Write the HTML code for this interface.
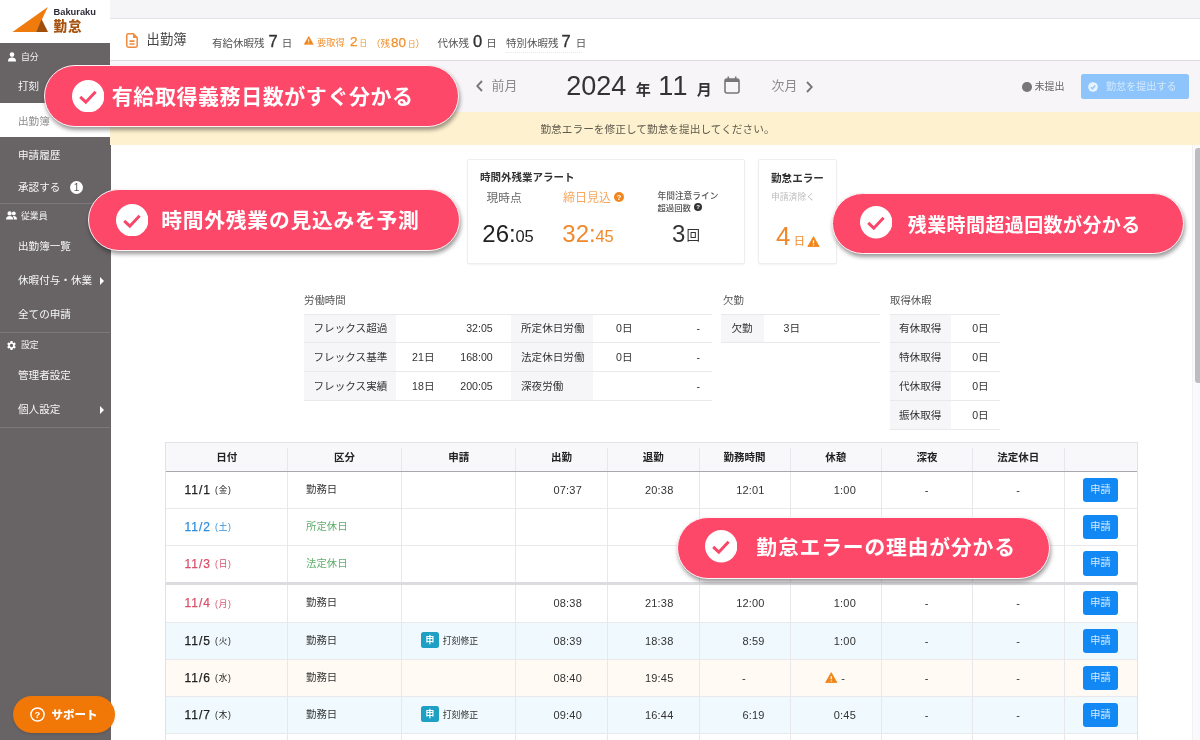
<!DOCTYPE html>
<html lang="ja">
<head>
<meta charset="utf-8">
<title>出勤簿</title>
<style>
*{box-sizing:border-box;margin:0;padding:0}
html,body{width:1200px;height:740px;overflow:hidden;background:#fff}
body{will-change:transform;font-family:"Liberation Sans","Noto Sans CJK JP",sans-serif;color:#333;position:relative;font-size:12px}
.abs{position:absolute}
.jp{font-family:"Noto Sans CJK JP","Liberation Sans",sans-serif}
/* sidebar */
#side{position:absolute;left:0;top:0;width:110.6px;height:740px;background:#686466}
#logo{position:absolute;left:0;top:0;width:110.6px;height:42.7px;background:#fff}
.sh{position:absolute;left:0;width:110px;color:#f2f2f2;font-size:8.9px;padding-left:21px;height:12px;line-height:12px}
.si{position:absolute;left:0;width:110px;color:#f6f6f6;font-size:10.6px;padding-left:18px;height:16px;line-height:16px;white-space:nowrap}
.sd{position:absolute;left:0;width:110px;height:1px;background:#7d797b}
.tri{position:absolute;left:100.3px;width:0;height:0;border-left:4.5px solid #fff;border-top:4px solid transparent;border-bottom:4px solid transparent}
/* top */
#strip{position:absolute;left:110px;top:0;width:1090px;height:19px;background:#f5f5f7;border-bottom:1px solid #e4e4e6}
#head{position:absolute;left:110px;top:19px;width:1090px;height:42px;background:#fff;border-bottom:1px solid #dcdcde}
#datebar{position:absolute;left:110px;top:61px;width:1090px;height:51px;background:#f7f5f7}
#warn{position:absolute;left:110px;top:112px;width:1090px;height:33px;background:#fef1d0;color:#5f5a4c;font-size:10.7px;line-height:34px;padding-left:5px;text-align:center}
.t{position:absolute;white-space:nowrap}
.hb{top:9.8px;line-height:24px;color:#555}
.hb .s{font-size:10.5px}
.hb .n{font-size:16.5px;color:#333;-webkit-text-stroke:.35px #333}
.hb.o{color:#f0902e}
/* pills */
.pill{position:absolute;background:#fd4869;border:1.4px solid #fff4f5;border-radius:40px;box-shadow:1px 3px 4px rgba(0,0,0,.4);color:#fff;font-weight:700;font-family:"Noto Sans CJK JP",sans-serif}
.pill .ck{position:absolute;background:#fff;border-radius:50%}
.pill .tx{position:absolute;white-space:nowrap}
/* cards */
.card{position:absolute;background:#fff;border:1px solid #eeeef1;border-radius:2px;box-shadow:0 1px 2px rgba(0,0,0,.05)}
/* summary */
.sum{position:absolute;font-size:10.5px;color:#333}
.sum .r{position:absolute;left:0;height:28.5px;border-top:1px solid #e6e6e8}
.sum .l{position:absolute;top:0;height:100%;background:#f7f7f9}
.sum .c{position:absolute;top:0;line-height:28px;white-space:nowrap}
.sc{font-size:10.6px;line-height:20px;color:#333}
/* table */
#tbl{position:absolute;left:166px;top:442.7px;width:970.7px;height:298px;border:none;overflow:hidden;box-shadow:0 0 0 1px #e2e2e6}
.th{position:absolute;top:0;height:28.5px;line-height:28.5px;text-align:center;font-weight:700;font-size:10.5px;color:#222}
.vl{position:absolute;top:5px;width:1px;height:298px;background:#e8e8ec}
.dt{line-height:20px}
.dt .d{font-size:12px;letter-spacing:1px;-webkit-text-stroke:.25px currentColor}
.dt .w{font-size:8.6px;letter-spacing:.8px;margin-left:4px;position:relative;top:-.5px}
.kb{font-size:10.4px;line-height:20px}
.tv{font-size:11px;line-height:20px;color:#333;letter-spacing:.2px}
.bd{width:18.5px;height:16.2px;border-radius:2.5px;background:#1e9fc4;color:#fff;font-weight:700;font-size:8.8px;line-height:16.2px;text-align:center}
.btn{position:absolute;width:35.6px;height:24.4px;background:#1188f3;border-radius:3px;color:#d6e9fd;font-size:10.2px;line-height:24.4px;text-align:center}
</style>
</head>
<body>
<div id="side">
  <div id="logo">
    <svg class="abs" style="left:0;top:0" width="110" height="42" viewBox="0 0 110 42">
      <polygon points="12.5,32 47.8,7 36,32" fill="#f07a0c"/>
      <polygon points="36,32 41.6,19.3 48,32" fill="#a04e0c"/>
      <text x="53.5" y="15" font-family="Liberation Sans, sans-serif" font-weight="700" font-size="8.6" fill="#2c2c38" textLength="42.5" lengthAdjust="spacingAndGlyphs">Bakuraku</text>
      <text x="53.5" y="31.3" font-family="Noto Sans CJK JP, sans-serif" font-weight="900" font-size="13.6" fill="#a8530f" letter-spacing="1">勤怠</text>
    </svg>
  </div>
  <svg class="abs" style="left:8px;top:51.5px" width="8" height="10" viewBox="0 0 8 10"><circle cx="4" cy="2.6" r="2.3" fill="#fff"/><path d="M0 9.5 C0 6.2 2 5.4 4 5.4 C6 5.4 8 6.2 8 9.5 Z" fill="#fff"/></svg>
  <div class="sh" style="top:50.8px">自分</div>
  <div class="si" style="top:78px">打刻</div>
  <div class="abs" style="left:0;top:102.5px;width:110.6px;height:34.2px;background:#fff"></div>
  <div class="si" style="top:113px;color:#8c8c8c">出勤簿</div>
  <div class="si" style="top:147px">申請履歴</div>
  <div class="si" style="top:179px">承認する</div>
  <div class="abs" style="left:70px;top:180.5px;width:13px;height:13px;border-radius:50%;background:#fff;color:#555;font-size:10px;line-height:13.5px;text-align:center">1</div>
  <div class="sd" style="top:203px"></div>
  <svg class="abs" style="left:6px;top:211px" width="11" height="9" viewBox="0 0 11 9"><circle cx="3.6" cy="2.4" r="2.1" fill="#fff"/><path d="M0 8.6 C0 5.8 1.8 5 3.6 5 C5.4 5 7.2 5.8 7.2 8.6 Z" fill="#fff"/><circle cx="7.8" cy="2.4" r="1.9" fill="#fff"/><path d="M7.9 8.6 C7.9 6.6 7.4 5.6 6.6 5.1 C7 5 7.4 5 7.8 5 C9.4 5 11 5.8 11 8.6 Z" fill="#fff"/></svg>
  <div class="sh" style="top:210.4px">従業員</div>
  <div class="si" style="top:238px">出勤簿一覧</div>
  <div class="si" style="top:272px">休暇付与・休業</div>
  <div class="tri" style="top:276.5px"></div>
  <div class="si" style="top:306px">全ての申請</div>
  <div class="sd" style="top:332px"></div>
  <svg class="abs" style="left:6.2px;top:340.300px" width="11" height="11" viewBox="0 0 24 24"><path fill="#fff" d="M19.14 12.94c.04-.3.06-.61.06-.94 0-.32-.02-.64-.07-.94l2.03-1.58a.49.49 0 0 0 .12-.61l-1.92-3.32a.49.49 0 0 0-.59-.22l-2.39.96c-.5-.38-1.03-.7-1.62-.94l-.36-2.54a.48.48 0 0 0-.48-.41h-3.84a.48.48 0 0 0-.47.41l-.36 2.54c-.59.24-1.13.57-1.62.94l-2.39-.96a.49.49 0 0 0-.59.22L2.74 8.87a.48.48 0 0 0 .12.61l2.03 1.58c-.05.3-.09.63-.09.94s.02.64.07.94l-2.03 1.58a.49.49 0 0 0-.12.61l1.92 3.32c.12.22.37.29.59.22l2.39-.96c.5.38 1.03.7 1.62.94l.36 2.54c.05.24.24.41.48.41h3.84c.24 0 .44-.17.47-.41l.36-2.54c.59-.24 1.13-.56 1.62-.94l2.39.96c.22.08.47 0 .59-.22l1.92-3.32a.48.48 0 0 0-.12-.61l-2.01-1.58zM12 15.6A3.6 3.6 0 1 1 12 8.400a3.6 3.6 0 0 1 0 7.2z"/></svg>
  <div class="sh" style="top:339px">設定</div>
  <div class="si" style="top:367px">管理者設定</div>
  <div class="si" style="top:401px">個人設定</div>
  <div class="tri" style="top:405.5px"></div>
  <div class="sd" style="top:427px"></div>
  <div class="abs" style="left:12.5px;top:696px;width:102.5px;height:37px;border-radius:18.5px;background:#f17707;box-shadow:0 1px 3px rgba(0,0,0,.15)"></div>
  <svg class="abs" style="left:29.5px;top:706.8px" width="15" height="15" viewBox="0 0 15 15"><circle cx="7.5" cy="7.5" r="6.600" fill="none" stroke="#fff" stroke-width="1.5"/><text x="7.5" y="11" text-anchor="middle" font-family="Liberation Sans, sans-serif" font-weight="700" font-size="9.5" fill="#fff">?</text></svg>
  <div class="abs jp" style="left:51.6px;top:705.3px;color:#fff;font-weight:900;font-size:11.5px;line-height:18px;white-space:nowrap">サポート</div>
</div>
<div id="strip"></div>
<div id="head">
  <svg class="abs" style="left:16px;top:13.5px" width="12" height="15" viewBox="0 0 12 15"><path d="M2.2 0.8 H7.4 L11.2 4.6 V12.8 Q11.2 14.2 9.8 14.2 H2.2 Q0.8 14.2 0.8 12.8 V2.2 Q0.8 0.8 2.2 0.8 Z" fill="none" stroke="#f08a3c" stroke-width="1.5" stroke-linejoin="round"/><path d="M7 0.8 V5 H11.2 Z" fill="#f08a3c"/><path d="M3.5 8.1 H8.5 M3.5 11 H8.5" stroke="#f08a3c" stroke-width="1.7"/></svg>
  <div class="t" style="left:36.6px;top:11.4px;font-size:13.3px;line-height:20px;color:#444">出勤簿</div>
  <div class="t hb" style="left:102px"><span class="s">有給休暇残</span><span class="n" style="margin-left:4px">7</span><span class="s" style="margin-left:4px">日</span></div>
  <svg class="abs" style="left:194px;top:17.2px" width="9.5" height="9" viewBox="0 0 19 18"><path d="M9.5 1 L18.3 16.6 H0.7 Z" fill="#f0861c" stroke="#f0861c" stroke-width="1.4" stroke-linejoin="round"/><path d="M9.5 6.5 V11.5 M9.5 13.4 V15" stroke="#fff" stroke-width="2"/></svg>
  <div class="t hb o" style="left:207px;top:11.3px"><span style="font-size:9.3px">要取得</span><span style="font-size:13.6px;margin-left:5px;-webkit-text-stroke:.25px #f0902e">2</span><span style="font-size:7.5px;margin-left:2px">日</span></div>
  <div class="t hb o" style="left:261px;top:11.6px"><span style="font-size:9.5px">（残</span><span style="font-size:13.5px;margin-left:1px;-webkit-text-stroke:.25px #f0902e">80</span><span style="font-size:7.5px;margin-left:2px">日</span><span style="font-size:9.5px">）</span></div>
  <div class="t hb" style="left:327.5px"><span class="s">代休残</span><span class="n" style="margin-left:4px">0</span><span class="s" style="margin-left:4px">日</span></div>
  <div class="t hb" style="left:396px"><span class="s">特別休暇残</span><span class="n" style="margin-left:3px">7</span><span class="s" style="margin-left:5px">日</span></div>
  <div class="abs" style="left:396px;top:32.5px;width:76px;height:0;border-top:1px dotted #e6e6ea"></div>
</div>
<div id="datebar">
  <svg class="abs" style="left:365.8px;top:18.8px" width="7" height="12" viewBox="0 0 7 12"><path d="M6 1 L1.2 6 L6 11" fill="none" stroke="#77777a" stroke-width="1.9"/></svg>
  <div class="t" style="left:381.5px;top:15.3px;font-size:12.9px;line-height:20px;color:#8a8a8d">前月</div>
  <div class="t" style="left:456.3px;top:8.6px;line-height:32px;color:#333"><span style="font-size:27px">2024</span><span class="jp" style="font-size:15px;font-weight:700;margin-left:9.3px">年</span><span style="font-size:27px;margin-left:7.5px;letter-spacing:1.2px">11</span><span class="jp" style="font-size:15px;font-weight:700;margin-left:8px">月</span></div>
  <svg class="abs" style="left:614px;top:14.7px" width="16" height="18" viewBox="0 0 16 18"><rect x="1" y="3" width="14" height="14" rx="2" fill="none" stroke="#77777a" stroke-width="1.6"/><path d="M1 4.6 Q1 3 3 3 H13 Q15 3 15 4.600 V6 H1 Z" fill="#77777a"/><path d="M4.3 0.600 V3 M11.7 0.600 V3" stroke="#77777a" stroke-width="1.6"/></svg>
  <div class="t" style="left:661.5px;top:15.3px;font-size:12.9px;line-height:20px;color:#8a8a8d">次月</div>
  <svg class="abs" style="left:696px;top:19.5px" width="7" height="12" viewBox="0 0 7 12"><path d="M1 1 L5.8 6 L1 11" fill="none" stroke="#77777a" stroke-width="1.9"/></svg>
  <div class="abs" style="left:912px;top:21px;width:9.5px;height:9.500px;border-radius:50%;background:#77777a"></div>
  <div class="t" style="left:924.5px;top:16px;font-size:10px;line-height:20px;color:#666">未提出</div>
  <div class="abs" style="left:970.5px;top:13px;width:108.5px;height:25px;border-radius:2.5px;background:#8cc4fb"></div>
  <svg class="abs" style="left:978px;top:20.5px" width="10" height="10" viewBox="0 0 10 10"><circle cx="5" cy="5" r="4.800" fill="#e8f3fe"/><path d="M2.8 5.200 L4.400 6.700 L7.300 3.500" fill="none" stroke="#8cc4fb" stroke-width="1.300"/></svg>
  <div class="t" style="left:996px;top:15.500px;font-size:10.100px;line-height:20px;color:#d4e9fd">勤怠を提出する</div>
</div>
<div id="warn">勤怠エラーを修正して勤怠を提出してください。</div>
<div class="abs" style="left:1191.5px;top:145px;width:8.5px;height:595px;background:#faf9fb;border-left:1px solid #f1f0f3"></div>
<div class="abs" style="left:1194.5px;top:148px;width:5.5px;height:235px;background:#bdbdbf;border-radius:3px 0 0 3px"></div>
<div id="main">
  <div class="card" style="left:467px;top:158.500px;width:277.5px;height:105px">
    <div class="t jp" style="left:12px;top:7.5px;font-size:10.5px;font-weight:700;line-height:20px;color:#333">時間外残業アラート</div>
    <div class="t" style="left:18.5px;top:28px;font-size:11.7px;line-height:20px;color:#666">現時点</div>
    <div class="t" style="left:14.3px;top:58.8px;line-height:32px;color:#222"><span style="font-size:24px">26:</span><span style="font-size:16.5px;margin-left:-.3px">05</span></div>
    <div class="t" style="left:95px;top:28px;font-size:12px;line-height:20px;color:#f6a861">締日見込</div>
    <svg class="abs" style="left:145.500px;top:32.5px" width="10" height="10" viewBox="0 0 10 10"><circle cx="5" cy="5" r="5" fill="#f0861c"/><text x="5" y="7.800" text-anchor="middle" font-family="Liberation Sans, sans-serif" font-weight="700" font-size="7.500" fill="#fff">?</text></svg>
    <div class="t" style="left:94.3px;top:58.8px;line-height:32px;color:#f0892b"><span style="font-size:24px">32:</span><span style="font-size:16.5px;margin-left:-.3px">45</span></div>
    <div class="t" style="left:189.5px;top:30.300px;font-size:8.700px;line-height:13px;color:#555;font-weight:500" >年間注意ライン</div>
    <div class="t" style="left:189.5px;top:42.100px;font-size:8.400px;line-height:13px;color:#555;font-weight:500">超過回数</div>
    <svg class="abs" style="left:225.800px;top:43.8px" width="8" height="8" viewBox="0 0 10 10"><circle cx="5" cy="5" r="5" fill="#333"/><text x="5" y="7.800" text-anchor="middle" font-family="Liberation Sans, sans-serif" font-weight="700" font-size="7.500" fill="#fff">?</text></svg>
    <div class="t" style="left:204px;top:58.8px;line-height:32px;color:#333"><span style="font-size:24px">3</span><span style="font-size:13.5px;margin-left:1.2px;position:relative;top:-2px">回</span></div>
  </div>
  <div class="card" style="left:758px;top:158.500px;width:78.500px;height:105px">
    <div class="t jp" style="left:12px;top:8.500px;font-size:10.600px;font-weight:700;line-height:20px;color:#333">勤怠エラー</div>
    <div class="t" style="left:12px;top:27.500px;font-size:8.800px;line-height:20px;color:#bdbdc0">申請済除く</div>
    <div class="t" style="left:17px;top:60.5px;line-height:32px;color:#f0892b"><span style="font-size:26px">4</span><span style="font-size:11.3px;margin-left:3.3px">日</span></div>
    <svg class="abs" style="left:48px;top:76px" width="13" height="11.500" viewBox="0 0 19 18"><path d="M9.5 1 L18.3 16.6 H0.7 Z" fill="#f0861c" stroke="#f0861c" stroke-width="1.4" stroke-linejoin="round"/><path d="M9.5 6.5 V11.5 M9.5 13.4 V15" stroke="#fff" stroke-width="2"/></svg>
  </div>
</div>
<div id="summ">
  <div class="t" style="left:304px;top:291px;font-size:10.4px;line-height:20px;color:#555">労働時間</div>
  <div class="abs" style="left:304px;top:314px;width:92px;height:86.6px;background:#f6f6f8"></div>
  <div class="abs" style="left:511px;top:314px;width:81.5px;height:86.6px;background:#f6f6f8"></div>
  <div class="abs" style="left:304px;top:313.5px;width:408px;height:1px;background:#e9e9ec"></div>
  <div class="abs" style="left:304px;top:342.3px;width:408px;height:1px;background:#e9e9ec"></div>
  <div class="abs" style="left:304px;top:371.2px;width:408px;height:1px;background:#e9e9ec"></div>
  <div class="abs" style="left:304px;top:400.1px;width:408px;height:1px;background:#e9e9ec"></div>
  <div class="t sc" style="left:313.5px;top:318.4px">フレックス超過</div>
  <div class="t sc" style="right:707.3px;top:318.4px">32:05</div>
  <div class="t sc" style="left:521px;top:318.4px">所定休日労働</div>
  <div class="t sc" style="right:567.5px;top:318.4px">0日</div>
  <div class="t sc" style="right:500px;top:318.4px">-</div>
  <div class="t sc" style="left:313.5px;top:347.2px">フレックス基準</div>
  <div class="t sc" style="right:765.5px;top:347.2px">21日</div>
  <div class="t sc" style="right:707.3px;top:347.2px">168:00</div>
  <div class="t sc" style="left:521px;top:347.2px">法定休日労働</div>
  <div class="t sc" style="right:567.5px;top:347.2px">0日</div>
  <div class="t sc" style="right:500px;top:347.2px">-</div>
  <div class="t sc" style="left:313.5px;top:376.1px">フレックス実績</div>
  <div class="t sc" style="right:765.5px;top:376.1px">18日</div>
  <div class="t sc" style="right:707.3px;top:376.1px">200:05</div>
  <div class="t sc" style="left:521px;top:376.1px">深夜労働</div>
  <div class="t sc" style="right:500px;top:376.1px">-</div>
  <div class="t" style="left:723px;top:291px;font-size:10.4px;line-height:20px;color:#555">欠勤</div>
  <div class="abs" style="left:721px;top:314px;width:43px;height:28.8px;background:#f6f6f8"></div>
  <div class="abs" style="left:721px;top:313.5px;width:159px;height:1px;background:#e9e9ec"></div>
  <div class="abs" style="left:721px;top:342.3px;width:159px;height:1px;background:#e9e9ec"></div>
  <div class="t sc" style="left:731.5px;top:318.4px">欠勤</div>
  <div class="t sc" style="right:400px;top:318.4px">3日</div>
  <div class="t" style="left:890px;top:291px;font-size:10.4px;line-height:20px;color:#555">取得休暇</div>
  <div class="abs" style="left:890px;top:314px;width:61px;height:115.5px;background:#f6f6f8"></div>
  <div class="abs" style="left:890px;top:313.5px;width:110px;height:1px;background:#e9e9ec"></div>
  <div class="abs" style="left:890px;top:342.3px;width:110px;height:1px;background:#e9e9ec"></div>
  <div class="abs" style="left:890px;top:371.2px;width:110px;height:1px;background:#e9e9ec"></div>
  <div class="abs" style="left:890px;top:400.1px;width:110px;height:1px;background:#e9e9ec"></div>
  <div class="abs" style="left:890px;top:429.0px;width:110px;height:1px;background:#e9e9ec"></div>
  <div class="t sc" style="left:899px;top:318.4px">有休取得</div>
  <div class="t sc" style="right:211.29999999999995px;top:318.4px">0日</div>
  <div class="t sc" style="left:899px;top:347.2px">特休取得</div>
  <div class="t sc" style="right:211.29999999999995px;top:347.2px">0日</div>
  <div class="t sc" style="left:899px;top:376.1px">代休取得</div>
  <div class="t sc" style="right:211.29999999999995px;top:376.1px">0日</div>
  <div class="t sc" style="left:899px;top:405.1px">振休取得</div>
  <div class="t sc" style="right:211.29999999999995px;top:405.1px">0日</div>
</div>
<div id="tbl">
<div class="abs" style="left:0;top:0;width:970.7px;height:28.5px;background:#f8f7f9"></div>
<div class="abs" style="left:0;top:179.4px;width:970.7px;height:37.3px;background:#f0f9fd"></div>
<div class="abs" style="left:0;top:216.7px;width:970.7px;height:37.0px;background:#fffaf3"></div>
<div class="abs" style="left:0;top:253.7px;width:970.7px;height:36.7px;background:#f0f9fd"></div>
<div class="vl" style="left:120.8px"></div>
<div class="vl" style="left:235.2px"></div>
<div class="vl" style="left:349.2px"></div>
<div class="vl" style="left:440.8px"></div>
<div class="vl" style="left:532.5px"></div>
<div class="vl" style="left:623.5px"></div>
<div class="vl" style="left:715.2px"></div>
<div class="vl" style="left:805.8px"></div>
<div class="vl" style="left:897.5px"></div>
<div class="th jp" style="left:0.0px;width:121.3px">日付</div>
<div class="th jp" style="left:121.3px;width:114.4px">区分</div>
<div class="th jp" style="left:235.7px;width:114.0px">申請</div>
<div class="th jp" style="left:349.7px;width:91.6px">出勤</div>
<div class="th jp" style="left:441.3px;width:91.7px">退勤</div>
<div class="th jp" style="left:533.0px;width:91.0px">勤務時間</div>
<div class="th jp" style="left:624.0px;width:91.7px">休憩</div>
<div class="th jp" style="left:715.7px;width:90.6px">深夜</div>
<div class="th jp" style="left:806.3px;width:91.7px">法定休日</div>
<div class="abs" style="left:0;top:28.2px;width:970.7px;height:1px;background:#a9a9ad"></div>
<div class="abs" style="left:0;top:64.9px;width:970.7px;height:1px;background:#e9e9ec"></div>
<div class="abs" style="left:0;top:102.2px;width:970.7px;height:1px;background:#e9e9ec"></div>
<div class="abs" style="left:0;top:178.9px;width:970.7px;height:1px;background:#e9e9ec"></div>
<div class="abs" style="left:0;top:216.2px;width:970.7px;height:1px;background:#e9e9ec"></div>
<div class="abs" style="left:0;top:253.2px;width:970.7px;height:1px;background:#e9e9ec"></div>
<div class="abs" style="left:0;top:289.9px;width:970.7px;height:1px;background:#e9e9ec"></div>
<div class="abs" style="left:0;top:327.2px;width:970.7px;height:1px;background:#e9e9ec"></div>
<div class="abs" style="left:-2px;top:139.0px;width:972.7px;height:3.2px;background:#dcdce0"></div>
<div class="t dt" style="left:18.5px;top:37.1px;color:#222"><span class="d">11/1</span><span class="w">(金)</span></div>
<div class="t kb" style="left:140px;top:37.1px;color:#333">勤務日</div>
<div class="t tv" style="right:554.7px;top:37.1px">07:37</div>
<div class="t tv" style="right:463.2px;top:37.1px">20:38</div>
<div class="t tv" style="right:372.0px;top:37.1px">12:01</div>
<div class="t tv" style="right:280.7px;top:37.1px">1:00</div>
<div class="t tv" style="left:758.7px;top:37.1px">-</div>
<div class="t tv" style="left:850.2px;top:37.1px">-</div>
<div class="btn" style="left:916.7px;top:34.9px">申請</div>
<div class="t dt" style="left:18.5px;top:74.1px;color:#2f8fdc"><span class="d">11/2</span><span class="w">(土)</span></div>
<div class="t kb" style="left:140px;top:74.1px;color:#5fae6c">所定休日</div>
<div class="btn" style="left:916.7px;top:71.9px">申請</div>
<div class="t dt" style="left:18.5px;top:110.9px;color:#d9506a"><span class="d">11/3</span><span class="w">(日)</span></div>
<div class="t kb" style="left:140px;top:110.9px;color:#5fae6c">法定休日</div>
<div class="btn" style="left:916.7px;top:108.7px">申請</div>
<div class="t dt" style="left:18.5px;top:150.6px;color:#d9506a"><span class="d">11/4</span><span class="w">(月)</span></div>
<div class="t kb" style="left:140px;top:150.6px;color:#333">勤務日</div>
<div class="t tv" style="right:554.7px;top:150.6px">08:38</div>
<div class="t tv" style="right:463.2px;top:150.6px">21:38</div>
<div class="t tv" style="right:372.0px;top:150.6px">12:00</div>
<div class="t tv" style="right:280.7px;top:150.6px">1:00</div>
<div class="t tv" style="left:758.7px;top:150.6px">-</div>
<div class="t tv" style="left:850.2px;top:150.6px">-</div>
<div class="btn" style="left:916.7px;top:148.4px">申請</div>
<div class="t dt" style="left:18.5px;top:188.1px;color:#222"><span class="d">11/5</span><span class="w">(火)</span></div>
<div class="t kb" style="left:140px;top:188.1px;color:#333">勤務日</div>
<div class="abs bd jp" style="left:254.6px;top:189.6px">申</div><div class="t" style="left:276.7px;top:188.1px;font-size:8.9px;line-height:20px;color:#333">打刻修正</div>
<div class="t tv" style="right:554.7px;top:188.1px">08:39</div>
<div class="t tv" style="right:463.2px;top:188.1px">18:38</div>
<div class="t tv" style="right:372.0px;top:188.1px">8:59</div>
<div class="t tv" style="right:280.7px;top:188.1px">1:00</div>
<div class="t tv" style="left:758.7px;top:188.1px">-</div>
<div class="t tv" style="left:850.2px;top:188.1px">-</div>
<div class="btn" style="left:916.7px;top:185.9px">申請</div>
<div class="t dt" style="left:18.5px;top:225.2px;color:#222"><span class="d">11/6</span><span class="w">(水)</span></div>
<div class="t kb" style="left:140px;top:225.2px;color:#333">勤務日</div>
<div class="t tv" style="right:554.7px;top:225.2px">08:40</div>
<div class="t tv" style="right:463.2px;top:225.2px">19:45</div>
<div class="t tv" style="left:576.1px;top:225.2px">-</div>
<svg class="abs" style="left:659px;top:229.2px" width="12.5" height="11.5" viewBox="0 0 19 18"><path d="M9.5 1 L18.3 16.6 H0.7 Z" fill="#f0861c" stroke="#f0861c" stroke-width="1.4" stroke-linejoin="round"/><path d="M9.5 6.5 V11.5 M9.5 13.4 V15" stroke="#fff" stroke-width="2"/></svg><div class="t tv" style="left:675.2px;top:225.2px">-</div>
<div class="t tv" style="left:758.7px;top:225.2px">-</div>
<div class="t tv" style="left:850.2px;top:225.2px">-</div>
<div class="btn" style="left:916.7px;top:223.0px">申請</div>
<div class="t dt" style="left:18.5px;top:262.1px;color:#222"><span class="d">11/7</span><span class="w">(木)</span></div>
<div class="t kb" style="left:140px;top:262.1px;color:#333">勤務日</div>
<div class="abs bd jp" style="left:254.6px;top:263.6px">申</div><div class="t" style="left:276.7px;top:262.1px;font-size:8.9px;line-height:20px;color:#333">打刻修正</div>
<div class="t tv" style="right:554.7px;top:262.1px">09:40</div>
<div class="t tv" style="right:463.2px;top:262.1px">16:44</div>
<div class="t tv" style="right:372.0px;top:262.1px">6:19</div>
<div class="t tv" style="right:280.7px;top:262.1px">0:45</div>
<div class="t tv" style="left:758.7px;top:262.1px">-</div>
<div class="t tv" style="left:850.2px;top:262.1px">-</div>
<div class="btn" style="left:916.7px;top:259.9px">申請</div>
<div class="t dt" style="left:18.5px;top:299.1px;color:#222"><span class="d">11/8</span><span class="w">(金)</span></div>
<div class="t kb" style="left:140px;top:299.1px;color:#333">勤務日</div>
<div class="btn" style="left:916.7px;top:296.9px">申請</div>
</div>
<div id="pills">
<div class="pill" style="left:44.4px;top:65px;width:414.6px;height:62.3px">
  <svg class="abs" style="left:26.6px;top:13.9px" width="32.4" height="32.4" viewBox="0 0 32.4 32.4"><circle cx="16.2" cy="16.2" r="16.2" fill="#fff"/><path d="M8.2 16.9 L13.8 22.2 L23.6 11.800" fill="none" stroke="#f8476a" stroke-width="3" stroke-linejoin="miter"/></svg>
  <div class="tx" style="left:66.4px;top:0px;line-height:59.9px;font-size:21px;letter-spacing:0.56px">有給取得義務日数がすぐ分かる</div>
</div>
<div class="pill" style="left:88px;top:189px;width:372.0px;height:62.0px">
  <svg class="abs" style="left:26.6px;top:13.6px" width="32.4" height="32.4" viewBox="0 0 32.4 32.4"><circle cx="16.2" cy="16.2" r="16.2" fill="#fff"/><path d="M8.2 16.9 L13.8 22.2 L23.6 11.800" fill="none" stroke="#f8476a" stroke-width="3" stroke-linejoin="miter"/></svg>
  <div class="tx" style="left:72.3px;top:0.3px;line-height:59.6px;font-size:20.8px;letter-spacing:0.72px">時間外残業の見込みを予測</div>
</div>
<div class="pill" style="left:832px;top:192.5px;width:352.0px;height:61.5px">
  <svg class="abs" style="left:26.6px;top:12.8px" width="32.4" height="32.4" viewBox="0 0 32.4 32.4"><circle cx="16.2" cy="16.2" r="16.2" fill="#fff"/><path d="M8.2 16.9 L13.8 22.2 L23.6 11.800" fill="none" stroke="#f8476a" stroke-width="3" stroke-linejoin="miter"/></svg>
  <div class="tx" style="left:74.8px;top:0px;line-height:59.1px;font-size:19px;letter-spacing:0.4px">残業時間超過回数が分かる</div>
</div>
<div class="pill" style="left:676.5px;top:516.5px;width:373.0px;height:62.3px">
  <svg class="abs" style="left:27.6px;top:12.9px" width="32.4" height="32.4" viewBox="0 0 32.4 32.4"><circle cx="16.2" cy="16.2" r="16.2" fill="#fff"/><path d="M8.2 16.9 L13.8 22.2 L23.6 11.800" fill="none" stroke="#f8476a" stroke-width="3" stroke-linejoin="miter"/></svg>
  <div class="tx" style="left:78.8px;top:-0.6px;line-height:59.9px;font-size:20.8px;letter-spacing:0.83px">勤怠エラーの理由が分かる</div>
</div>
</div>
</body>
</html>
